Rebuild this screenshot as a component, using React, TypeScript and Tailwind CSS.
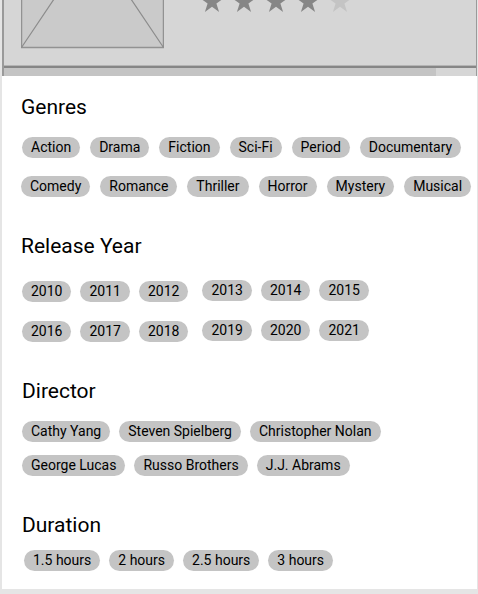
import React from "react";

const STAR =
  "M12 0L14.7 8.3H23.4L16.4 13.4L19.1 21.7L12 16.6L4.9 21.7L7.6 13.4L0.6 8.3H9.3Z";

function Chip({ label }: { label: string }) {
  return (
    <button
      type="button"
      className="h-[21px] shrink-0 whitespace-nowrap rounded-full bg-[#c4c4c4] px-[9px] text-sm leading-[21px] text-black"
    >
      {label}
    </button>
  );
}

function Row({ items, gap = "gap-[9px]" }: { items: string[]; gap?: string }) {
  return (
    <div className={`flex ${gap}`}>
      {items.map((item) => (
        <Chip key={item} label={item} />
      ))}
    </div>
  );
}

function Heading({ children }: { children: React.ReactNode }) {
  return <h2 className="text-[21px] leading-6 text-black">{children}</h2>;
}

function Preview() {
  return (
    <header className="border-l-2 border-r border-[#9a9a9a]">
      <div className="flex h-[65px] bg-[#d6d6d6] pl-[17px]">
        <svg width="143" height="49" viewBox="0 0 143 49" className="shrink-0" aria-hidden="true">
          <rect x="0.5" y="-164" width="142" height="211.5" fill="#cacaca" stroke="#929292" strokeWidth="1.5" />
          <path d="M0.5 47.5L142.5 -164M142.5 47.5L0.5 -164" stroke="#8c8c8c" strokeWidth="1.2" fill="none" />
        </svg>
        <svg
          width="152"
          height="13"
          viewBox="0 0 152 13"
          className="ml-9 shrink-0"
          role="img"
          aria-label="4 out of 5 stars"
        >
          {[0, 1, 2, 3, 4].map((i) => (
            <path key={i} d={STAR} transform={`translate(${i * 32} -9.8)`} fill={i < 4 ? "#868686" : "#c4c4c4"} />
          ))}
        </svg>
      </div>
      <div className="h-[3px] border-t border-[#b4b4b4] bg-[#868686]" />
      <div className="h-2 bg-[#d6d6d6] pr-10">
        <div className="h-full bg-[#c4c4c4]" />
      </div>
    </header>
  );
}

export default function App() {
  return (
    <div className="min-h-screen bg-[#e5e5e5] pl-[2px] pr-px font-[Roboto,sans-serif]">
      <main className="overflow-hidden bg-white">
        <Preview />
        <div className="pb-[18px] pl-[19px] pt-[19px]">
          <section>
            <Heading>Genres</Heading>
            <div className="mt-[18px] flex flex-col gap-[18px]">
              <div className="pl-px">
                <Row gap="gap-[10px]" items={["Action", "Drama", "Fiction", "Sci-Fi", "Period", "Documentary"]} />
              </div>
              <Row gap="gap-[10px]" items={["Comedy", "Romance", "Thriller", "Horror", "Mystery", "Musical"]} />
            </div>
          </section>
          <section className="mt-[37px]">
            <Heading>Release Year</Heading>
            <div className="mt-[22px] flex gap-[14px] pl-px">
              <div className="flex flex-col gap-[19px] pt-px">
                <Row items={["2010", "2011", "2012"]} />
                <Row items={["2016", "2017", "2018"]} />
              </div>
              <div className="flex flex-col gap-[19px]">
                <Row items={["2013", "2014", "2015"]} />
                <Row items={["2019", "2020", "2021"]} />
              </div>
            </div>
          </section>
          <section className="mt-[37px] pl-px">
            <Heading>Director</Heading>
            <div className="mt-[18px] flex flex-col gap-[13px]">
              <Row items={["Cathy Yang", "Steven Spielberg", "Christopher Nolan"]} />
              <Row items={["George Lucas", "Russo Brothers", "J.J. Abrams"]} />
            </div>
          </section>
          <section className="mt-[37px] pl-px">
            <Heading>Duration</Heading>
            <div className="mt-[13px] pl-[2px]">
              <Row items={["1.5 hours", "2 hours", "2.5 hours", "3 hours"]} />
            </div>
          </section>
        </div>
      </main>
    </div>
  );
}
